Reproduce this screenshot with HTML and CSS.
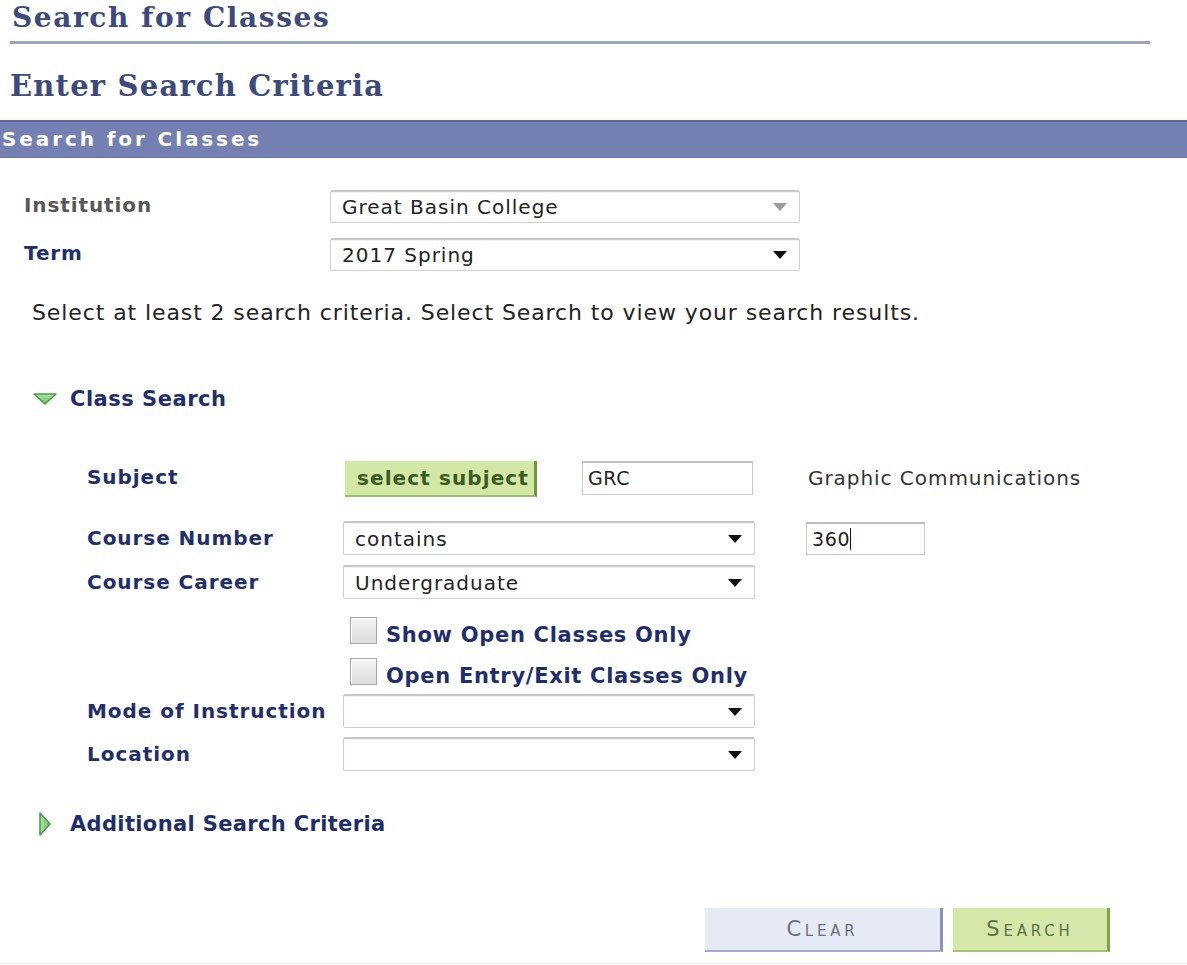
FILE: index.html
```html
<!DOCTYPE html>
<html lang="en">
<head>
<meta charset="utf-8">
<title>Search for Classes</title>
<link rel="stylesheet" href="styles.css">
</head>
<body>
<div class="page">
  <h1 class="page-title">Search for Classes</h1>
  <h2 class="sub-title">Enter Search Criteria</h2>
  <div class="bar">Search for Classes</div>

  <div class="top-fields">
    <div class="row">
      <span class="label label-gray">Institution</span>
      <div class="select select-wide"><span>Great Basin College</span><span class="arrow arrow-gray"></span></div>
    </div>
    <div class="row row-term">
      <span class="label">Term</span>
      <div class="select select-wide"><span>2017 Spring</span><span class="arrow"></span></div>
    </div>
  </div>

  <p class="instructions">Select at least 2 search criteria. Select Search to view your search results.</p>

  <div class="group-head group-open">
    <svg class="tri" width="26" height="14" viewBox="0 0 26 14"><defs><linearGradient id="g1" x1="0" y1="0" x2="0" y2="1"><stop offset="0" stop-color="#a9e3a3"/><stop offset="1" stop-color="#6cc066"/></linearGradient></defs><path d="M2 2 L24 2 L13 12 Z" fill="url(#g1)" stroke="#4f9a4c" stroke-width="1.6" stroke-linejoin="round"/></svg>
    <span>Class Search</span>
  </div>

  <div class="criteria">
    <div class="crow crow-subject">
      <span class="clabel">Subject</span>
      <button class="btn-subject">select subject</button>
      <div class="input input-grc">GRC</div>
      <span class="desc">Graphic Communications</span>
    </div>
    <div class="crow crow-num">
      <span class="clabel">Course Number</span>
      <div class="select select-mid"><span>contains</span><span class="arrow"></span></div>
      <div class="input input-num">360<span class="caret"></span></div>
    </div>
    <div class="crow crow-career">
      <span class="clabel">Course Career</span>
      <div class="select select-mid"><span>Undergraduate</span><span class="arrow"></span></div>
    </div>
    <div class="check-row check-first">
      <span class="checkbox"></span><span class="check-label">Show Open Classes Only</span>
    </div>
    <div class="check-row check-second">
      <span class="checkbox"></span><span class="check-label">Open Entry/Exit Classes Only</span>
    </div>
    <div class="crow crow-mode">
      <span class="clabel">Mode of Instruction</span>
      <div class="select select-mid"><span></span><span class="arrow"></span></div>
    </div>
    <div class="crow crow-loc">
      <span class="clabel">Location</span>
      <div class="select select-mid"><span></span><span class="arrow"></span></div>
    </div>
  </div>

  <div class="group-head group-closed">
    <svg class="tri-r" width="14" height="26" viewBox="0 0 14 26"><defs><linearGradient id="g2" x1="0" y1="0" x2="1" y2="0"><stop offset="0" stop-color="#a9e3a3"/><stop offset="1" stop-color="#6cc066"/></linearGradient></defs><path d="M2 2 L12 13 L2 24 Z" fill="url(#g2)" stroke="#4f9a4c" stroke-width="1.6" stroke-linejoin="round"/></svg>
    <span>Additional Search Criteria</span>
  </div>

  <div class="actions">
    <button class="btn btn-clear">Clear</button>
    <button class="btn btn-search">Search</button>
  </div>
  <div class="bottom-line"></div>
</div>
</body>
</html>
```

FILE: styles.css
```css
* { box-sizing: border-box; }
html, body { margin: 0; padding: 0; background: #ffffff; }
body { font-family: "DejaVu Sans", Verdana, sans-serif; color: #222; }
.page { width: 1187px; height: 965px; overflow: hidden; }

.page-title {
  margin: 0 37px 0 10px;
  padding: 0 0 6px 2px;
  font-family: "DejaVu Serif", Georgia, serif;
  font-weight: bold;
  font-size: 28px;
  letter-spacing: 1.6px;
  line-height: 35px;
  color: #3d4a7c;
  border-bottom: 3px solid #9ca4c3;
}
.sub-title {
  margin: 24px 0 0 10px;
  font-family: "DejaVu Serif", Georgia, serif;
  font-weight: bold;
  font-size: 29px;
  letter-spacing: 1.2px;
  line-height: 36px;
  color: #3d4a7c;
}
.bar {
  margin-top: 16px;
  height: 38px;
  background: #7380b1;
  border-top: 2px solid #5d6a9d;
  border-bottom: 1px solid #6673a6;
  color: #fff;
  font-weight: bold;
  font-size: 20px;
  letter-spacing: 2.9px;
  line-height: 34px;
  padding-left: 2px;
}

.top-fields { margin-top: 32px; }
.row { display: flex; align-items: center; }
.row-term { margin-top: 15px; }
.label {
  width: 330px;
  padding-left: 24px;
  margin-top: -3px;
  font-weight: bold;
  font-size: 20px;
  letter-spacing: 0.9px;
  color: #1f2e6c;
}
.label-gray { color: #585858; }

.select {
  display: flex;
  align-items: center;
  justify-content: space-between;
  height: 33px;
  padding: 0 12px 0 11px;
  border: 1px solid #cfcfcf;
  border-top: 2px solid #c8c8c8;
  border-radius: 2px;
  background: #fff;
  font-size: 20px;
  letter-spacing: 1px;
  color: #222;
  box-shadow: inset 0 1px 1px rgba(0,0,0,0.05);
}
.select-wide { width: 470px; }
.select-mid { width: 412px; height: 34px; }
.arrow {
  width: 0; height: 0;
  border-left: 7px solid transparent;
  border-right: 7px solid transparent;
  border-top: 8px solid #111;
}
.arrow-gray { border-top-color: #9a9a9a; }

.instructions {
  margin: 30px 0 0 32px;
  font-size: 22px;
  letter-spacing: 0.9px;
  line-height: 24px;
  color: #222;
}

.group-head {
  display: flex;
  align-items: center;
  font-weight: bold;
  font-size: 21px;
  color: #1f2e6c;
}
.group-open { margin-top: 62px; padding-left: 32px; letter-spacing: 0.5px; }
.group-open .tri { margin-right: 12px; }
.group-closed { margin-top: 40px; padding-left: 38px; letter-spacing: 0.35px; }
.group-closed .tri-r { margin-right: 18px; }

.criteria { padding-left: 87px; }
.crow { display: flex; align-items: center; }
.clabel {
  width: 256px;
  font-weight: bold;
  font-size: 20px;
  letter-spacing: 0.95px;
  color: #1f2e6c;
}
.crow-subject { margin-top: 50px; }
.crow-subject .clabel { margin-top: -4px; }
.btn-subject {
  margin: 0 0 0 2px;
  width: 192px;
  height: 36px;
  padding: 0 0 0 12px;
  text-align: left;
  background: #d2e8a6;
  border: none;
  border-right: 3px solid #6f9a3a;
  border-bottom: 2px solid #9dbf6a;
  font-family: "DejaVu Sans", Verdana, sans-serif;
  font-weight: bold;
  font-size: 20px;
  letter-spacing: 1.1px;
  color: #3e5b22;
}
.input {
  height: 34px;
  border: 1px solid #c9c9c9;
  border-top: 2px solid #bdbdbd;
  background: #fff;
  font-size: 19px;
  letter-spacing: 0.6px;
  line-height: 31px;
  padding-left: 5px;
  color: #222;
}
.input-grc { width: 171px; margin-left: 45px; margin-top: -2px; }
.desc { margin-left: 55px; font-size: 20px; letter-spacing: 0.95px; color: #333; margin-top: -3px; }
.crow-num { margin-top: 24px; }
.input-num { width: 119px; margin-left: 51px; height: 33px; }
.caret { display: inline-block; width: 1px; height: 22px; background: #111; vertical-align: -4px; }
.crow-career { margin-top: 10px; }

.check-row { display: flex; align-items: flex-start; margin-left: 263px; }
.check-first { margin-top: 18px; }
.check-second { margin-top: 11px; }
.checkbox {
  flex: none;
  width: 27px; height: 27px;
  border: 1px solid #a8a8a8;
  background: linear-gradient(#f4f4f4, #dcdcdc);
  box-shadow: inset 1px 1px 0 #fff;
  margin-right: 9px;
}
.check-label {
  padding-top: 6px;
  line-height: 24px;
  font-weight: bold;
  font-size: 21px;
  letter-spacing: 0.7px;
  color: #1f2e6c;
}
.crow-mode { margin-top: 6px; }
.crow-loc { margin-top: 9px; }

.actions {
  display: flex;
  margin: 71px 0 0 705px;
  gap: 10px;
}
.btn {
  height: 44px;
  border: none;
  font-family: "DejaVu Sans", Verdana, sans-serif;
  font-size: 21px;
  font-variant: small-caps;
  letter-spacing: 3.8px;
}
.btn-clear {
  width: 238px;
  background: #e6eaf4;
  border-right: 3px solid #8a91c2;
  border-bottom: 2px solid #a5abd0;
  color: #6a6f80;
}
.btn-search {
  width: 157px;
  background: #d5e8a9;
  border-right: 3px solid #7ea34b;
  border-bottom: 2px solid #a3c276;
  color: #5b7440;
}
.bottom-line { margin-top: 11px; border-top: 1px solid #ececec; }
```
